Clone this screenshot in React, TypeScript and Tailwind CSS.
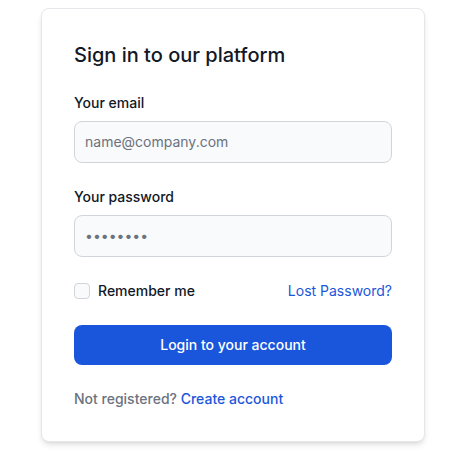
export default function App() {
  return (
    <div
      className="min-h-screen bg-white px-[41px] pt-2"
      style={{ fontFamily: "Inter, 'Noto Sans', sans-serif" }}
    >
      <div className="w-[384px] rounded-lg border border-gray-200 bg-white p-8 shadow-md">
        <form className="space-y-6" onSubmit={(e) => e.preventDefault()}>
          <h5 className="text-xl font-medium text-[#111827]">Sign in to our platform</h5>
          <div>
            <label htmlFor="email" className="mb-2 block text-sm font-medium text-[#111827]">
              Your email
            </label>
            <input
              type="email"
              id="email"
              placeholder="name@company.com"
              className="block w-full rounded-lg border border-[#d1d5db] bg-[#f9fafb] p-2.5 text-sm text-[#111827] placeholder:text-[#6b7280] outline-none"
            />
          </div>
          <div>
            <label htmlFor="password" className="mb-2 block text-sm font-medium text-[#111827]">
              Your password
            </label>
            <input
              type="password"
              id="password"
              placeholder="••••••••"
              className="block w-full rounded-lg border border-[#d1d5db] bg-[#f9fafb] p-2.5 text-sm text-[#111827] placeholder:text-[#6b7280] outline-none"
            />
          </div>
          <div className="flex items-start">
            <div className="flex h-5 items-center">
              <input
                id="remember"
                type="checkbox"
                className="h-4 w-4 appearance-none rounded border border-[#d1d5db] bg-[#f9fafb]"
              />
            </div>
            <label htmlFor="remember" className="ml-2 text-sm font-medium text-[#111827]">
              Remember me
            </label>
            <a href="#" className="ml-auto text-sm text-[#1a56db] hover:underline">
              Lost Password?
            </a>
          </div>
          <button
            type="submit"
            className="w-full rounded-lg bg-[#1a56db] px-5 py-2.5 text-center text-sm font-medium text-white"
          >
            Login to your account
          </button>
          <div className="text-sm font-medium text-[#6b7280]">
            Not registered?{" "}
            <a href="#" className="text-[#1a56db] hover:underline">
              Create account
            </a>
          </div>
        </form>
      </div>
    </div>
  );
}
